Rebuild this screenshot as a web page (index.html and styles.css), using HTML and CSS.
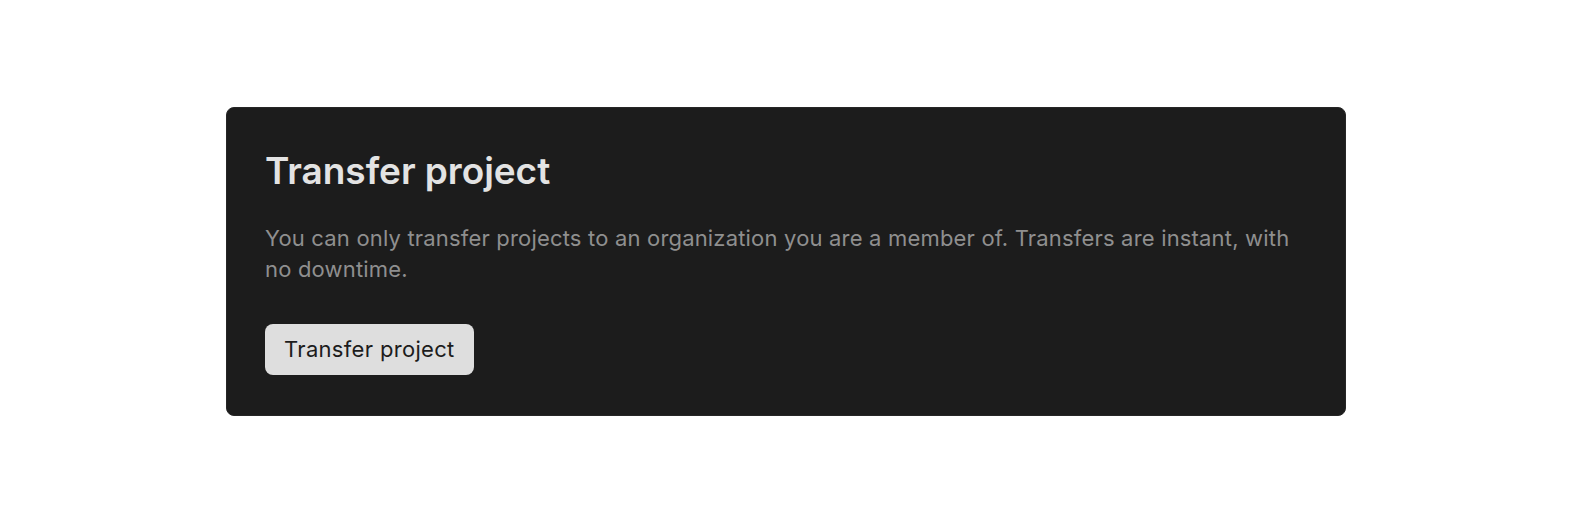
FILE: index.html
```html
<!DOCTYPE html>
<html lang="en">
<head>
<meta charset="utf-8">
<title>Transfer project</title>
<link rel="stylesheet" href="styles.css">
</head>
<body>
<main class="page">
  <section class="card">
    <h2 class="card-title">Transfer project</h2>
    <p class="card-text">You can only transfer projects to an organization you are a member of. Transfers are instant, with no downtime.</p>
    <div class="card-actions">
      <button class="btn" type="button">Transfer project</button>
    </div>
  </section>
</main>
</body>
</html>
```
FILE: styles.css
```css
* { box-sizing: border-box; }
html, body { margin: 0; padding: 0; background: #ffffff; }
body { font-family: Inter, "Noto Sans", sans-serif; }
.page {
  min-height: 522px;
  display: flex;
  align-items: center;
  justify-content: center;
  padding: 0 226px;
}
.card {
  width: 1120px;
  background: #1c1c1c;
  border: 1px solid #262626;
  border-radius: 8px;
  padding: 39px 39px 40px 38px;
}
.card-title {
  margin: 0;
  font-size: 37px;
  line-height: 48px;
  font-weight: 600;
  color: #e3e3e3;
  letter-spacing: -0.05px;
}
.card-text {
  margin: 28px 0 0;
  font-size: 22px;
  line-height: 31px;
  font-weight: 400;
  color: #8f8f8f;
  letter-spacing: 0.18px;
}
.card-actions { margin-top: 39px; display: flex; }
.btn {
  font-family: inherit;
  font-size: 22px;
  line-height: 31px;
  font-weight: 400;
  letter-spacing: 0.32px;
  color: #1c1c1c;
  background: #dedede;
  border: none;
  border-radius: 8px;
  padding: 10px 19px;
}
```
